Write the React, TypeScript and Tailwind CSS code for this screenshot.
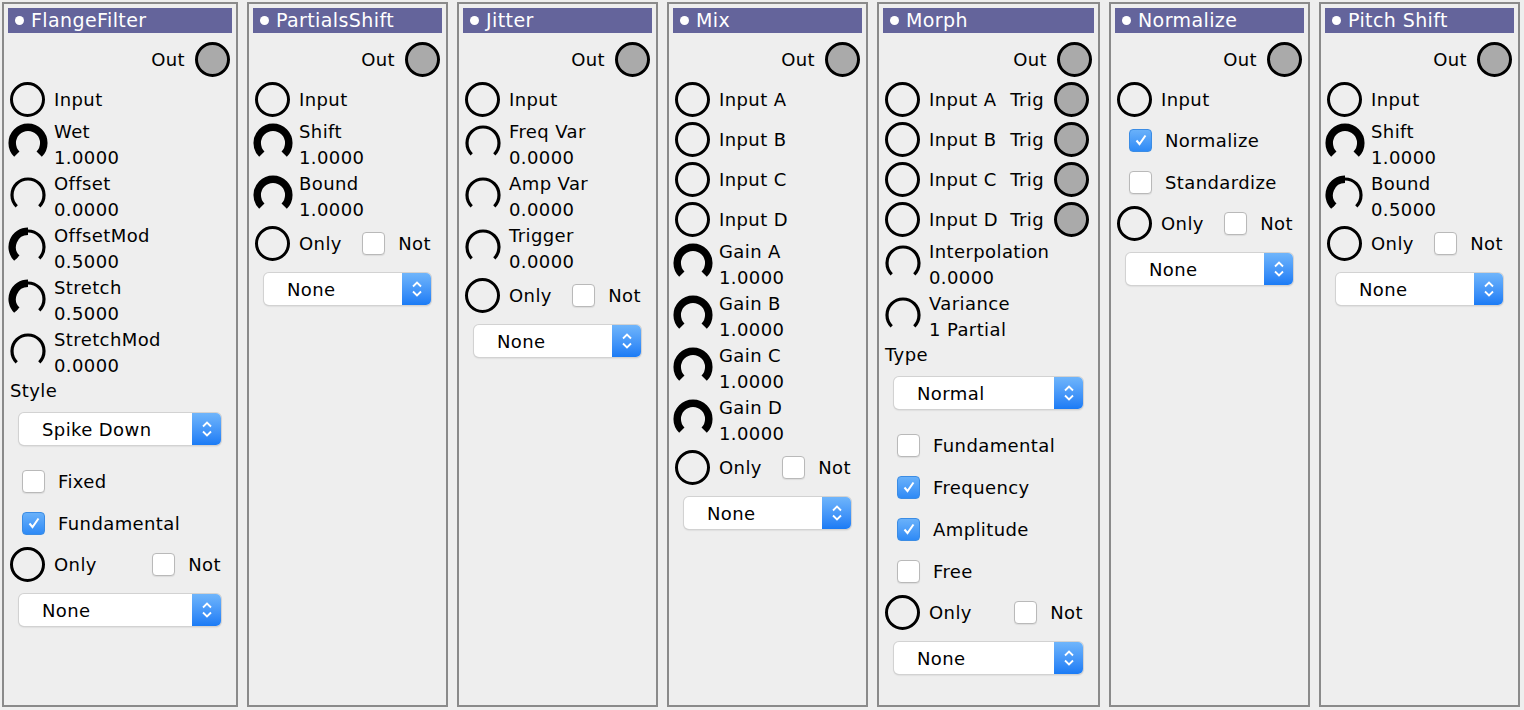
import React from 'react'

const FONT = "font-['DejaVu_Sans',sans-serif]"

function Panel({ title, w, children }: { title: string; w: string; children: React.ReactNode }) {
  return (
    <div className={`${w} h-[705px] shrink-0 border-2 border-[#8a8a8a] bg-[#eeeeee] flex flex-col`}>
      <div className="mx-[4px] mt-[4px] h-[25px] bg-[#64649b] flex items-center pl-[7px] gap-[7px] text-white">
        <span className="w-[9px] h-[9px] rounded-full bg-white" />
        <span className="leading-none text-[19px]">{title}</span>
      </div>
      <div className="px-[6px] mt-[6px] flex flex-col">{children}</div>
    </div>
  )
}

function Port({ filled }: { filled?: boolean }) {
  return (
    <span
      className={`w-[35px] h-[35px] rounded-full border-[3.5px] border-black shrink-0 ${filled ? 'bg-[#aaaaaa]' : ''}`}
    />
  )
}

function OutRow() {
  return (
    <div className="h-[40px] flex items-center justify-end gap-[10px]">
      <span>Out</span>
      <Port filled />
    </div>
  )
}

function PortRow({ label, trig }: { label: string; trig?: boolean }) {
  return (
    <div className="h-[40px] flex items-center gap-[9px]">
      <Port />
      <span>{label}</span>
      {trig && (
        <div className="ml-auto flex items-center gap-[10px] mr-[3px]">
          <span>Trig</span>
          <Port filled />
        </div>
      )}
    </div>
  )
}

// arc from angle a0 down to a1 (degrees, counter-clockwise from +x), drawn clockwise
function arc(r: number, a0: number, a1: number) {
  const p = (a: number) => [20 + r * Math.cos((a * Math.PI) / 180), 20 - r * Math.sin((a * Math.PI) / 180)]
  const [x0, y0] = p(a0)
  const [x1, y1] = p(a1)
  const large = a0 - a1 > 180 ? 1 : 0
  return `M ${x0.toFixed(2)} ${y0.toFixed(2)} A ${r} ${r} 0 ${large} 1 ${x1.toFixed(2)} ${y1.toFixed(2)}`
}

function Knob({ v }: { v: number }) {
  const start = 225
  const span = 270
  return (
    <svg width="40" height="40" viewBox="0 0 40 40" className="shrink-0 -ml-[2px] -mt-[4px]">
      {v < 1 && <path d={arc(16, start, start - span)} fill="none" stroke="black" strokeWidth="3.2" />}
      {v > 0 && <path d={arc(15.8, start, start - span * v)} fill="none" stroke="black" strokeWidth="7.5" />}
    </svg>
  )
}

function KnobRow({ label, value, v }: { label: string; value: string; v: number }) {
  return (
    <div className="h-[52px] flex items-center gap-[6px]">
      <Knob v={v} />
      <div className="flex flex-col">
        <span className="h-[26px] leading-[26px]">{label}</span>
        <span className="h-[26px] leading-[26px]">{value}</span>
      </div>
    </div>
  )
}

function LabelRow({ label }: { label: string }) {
  return <div className="h-[24px] leading-[24px]">{label}</div>
}

function Select({ value }: { value: string }) {
  return (
    <div className="mx-[9px] mt-[10px] mb-[15px] h-[32px] flex rounded-[5px] bg-white shadow-[0_0_0_1px_#d2d2d2,0_1px_2px_rgba(0,0,0,0.2)]">
      <div className="flex-1 pl-[23px] flex items-center">{value}</div>
      <div className="w-[29px] rounded-r-[5px] bg-gradient-to-b from-[#6fb5fb] to-[#1a7bf5] flex items-center justify-center">
        <svg width="12" height="20" viewBox="0 0 12 20">
          <path d="M2 7.5 L6 3.5 L10 7.5" fill="none" stroke="white" strokeWidth="1.8" />
          <path d="M2 12.5 L6 16.5 L10 12.5" fill="none" stroke="white" strokeWidth="1.8" />
        </svg>
      </div>
    </div>
  )
}

function Check({ checked }: { checked?: boolean }) {
  return checked ? (
    <span className="w-[23px] h-[23px] rounded-[4px] bg-gradient-to-b from-[#69b1fa] to-[#2d8af6] border border-[#3b8ce4] flex items-center justify-center shrink-0">
      <svg width="14" height="14" viewBox="0 0 14 14">
        <path d="M2.5 7.5 L5.5 11 L11.5 2.5" fill="none" stroke="white" strokeWidth="2" />
      </svg>
    </span>
  ) : (
    <span className="w-[23px] h-[23px] rounded-[4px] bg-white border border-[#b9b9b9] shadow-[0_1px_1px_rgba(0,0,0,0.08)] shrink-0" />
  )
}

function CheckRow({ label, checked }: { label: string; checked?: boolean }) {
  return (
    <div className="h-[42px] flex items-center gap-[13px] pl-[12px]">
      <Check checked={checked} />
      <span>{label}</span>
    </div>
  )
}

function OnlyRow() {
  return (
    <div className="h-[40px] flex items-center">
      <div className="flex items-center gap-[9px]">
        <Port />
        <span>Only</span>
      </div>
      <div className="ml-auto mr-[9px] flex items-center gap-[13px]">
        <Check />
        <span>Not</span>
      </div>
    </div>
  )
}

export default function App() {
  return (
    <div className={`${FONT} text-[18px] tracking-[0.4px] text-black bg-[#eeeeee] w-[1524px] h-[710px] pl-[2px] pt-[2px] flex gap-[9px] overflow-hidden`}>
      <Panel title="FlangeFilter" w="w-[236px]">
        <OutRow />
        <PortRow label="Input" />
        <KnobRow label="Wet" value="1.0000" v={1} />
        <KnobRow label="Offset" value="0.0000" v={0} />
        <KnobRow label="OffsetMod" value="0.5000" v={0.5} />
        <KnobRow label="Stretch" value="0.5000" v={0.5} />
        <KnobRow label="StretchMod" value="0.0000" v={0} />
        <LabelRow label="Style" />
        <Select value="Spike Down" />
        <CheckRow label="Fixed" />
        <CheckRow label="Fundamental" checked />
        <OnlyRow />
        <Select value="None" />
      </Panel>

      <Panel title="PartialsShift" w="w-[201px]">
        <OutRow />
        <PortRow label="Input" />
        <KnobRow label="Shift" value="1.0000" v={1} />
        <KnobRow label="Bound" value="1.0000" v={1} />
        <OnlyRow />
        <Select value="None" />
      </Panel>

      <Panel title="Jitter" w="w-[201px]">
        <OutRow />
        <PortRow label="Input" />
        <KnobRow label="Freq Var" value="0.0000" v={0} />
        <KnobRow label="Amp Var" value="0.0000" v={0} />
        <KnobRow label="Trigger" value="0.0000" v={0} />
        <OnlyRow />
        <Select value="None" />
      </Panel>

      <Panel title="Mix" w="w-[201px]">
        <OutRow />
        <PortRow label="Input A" />
        <PortRow label="Input B" />
        <PortRow label="Input C" />
        <PortRow label="Input D" />
        <KnobRow label="Gain A" value="1.0000" v={1} />
        <KnobRow label="Gain B" value="1.0000" v={1} />
        <KnobRow label="Gain C" value="1.0000" v={1} />
        <KnobRow label="Gain D" value="1.0000" v={1} />
        <OnlyRow />
        <Select value="None" />
      </Panel>

      <Panel title="Morph" w="w-[223px]">
        <OutRow />
        <PortRow label="Input A" trig />
        <PortRow label="Input B" trig />
        <PortRow label="Input C" trig />
        <PortRow label="Input D" trig />
        <KnobRow label="Interpolation" value="0.0000" v={0} />
        <KnobRow label="Variance" value="1 Partial" v={0} />
        <LabelRow label="Type" />
        <Select value="Normal" />
        <CheckRow label="Fundamental" />
        <CheckRow label="Frequency" checked />
        <CheckRow label="Amplitude" checked />
        <CheckRow label="Free" />
        <OnlyRow />
        <Select value="None" />
      </Panel>

      <Panel title="Normalize" w="w-[201px]">
        <OutRow />
        <PortRow label="Input" />
        <CheckRow label="Normalize" checked />
        <CheckRow label="Standardize" />
        <OnlyRow />
        <Select value="None" />
      </Panel>

      <Panel title="Pitch Shift" w="w-[201px]">
        <OutRow />
        <PortRow label="Input" />
        <KnobRow label="Shift" value="1.0000" v={1} />
        <KnobRow label="Bound" value="0.5000" v={0.5} />
        <OnlyRow />
        <Select value="None" />
      </Panel>
    </div>
  )
}
